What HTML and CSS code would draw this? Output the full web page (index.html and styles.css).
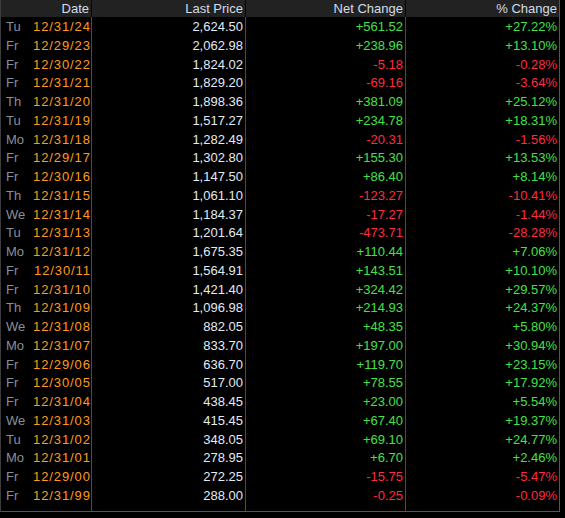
FILE: index.html
```html
<!DOCTYPE html>
<html>
<head>
<meta charset="utf-8">
<link rel="stylesheet" href="styles.css">
</head>
<body>
<div class="board">
  <div class="row head">
    <div class="cell c1">Date</div>
    <div class="cell">Last Price</div>
    <div class="cell">Net Change</div>
    <div class="cell">% Change</div>
  </div>
  <div id="rows" class="rows"></div>
  <div class="row filler">
    <div class="cell c1"></div><div class="cell"></div><div class="cell"></div><div class="cell"></div>
  </div>
</div>
<script src="app.js"></script>
</body>
</html>
```
FILE: app.js
```js
const data = [
["Tu","12/31/24","2,624.50","+561.52","+27.22%"],
["Fr","12/29/23","2,062.98","+238.96","+13.10%"],
["Fr","12/30/22","1,824.02","-5.18","-0.28%"],
["Fr","12/31/21","1,829.20","-69.16","-3.64%"],
["Th","12/31/20","1,898.36","+381.09","+25.12%"],
["Tu","12/31/19","1,517.27","+234.78","+18.31%"],
["Mo","12/31/18","1,282.49","-20.31","-1.56%"],
["Fr","12/29/17","1,302.80","+155.30","+13.53%"],
["Fr","12/30/16","1,147.50","+86.40","+8.14%"],
["Th","12/31/15","1,061.10","-123.27","-10.41%"],
["We","12/31/14","1,184.37","-17.27","-1.44%"],
["Tu","12/31/13","1,201.64","-473.71","-28.28%"],
["Mo","12/31/12","1,675.35","+110.44","+7.06%"],
["Fr","12/30/11","1,564.91","+143.51","+10.10%"],
["Fr","12/31/10","1,421.40","+324.42","+29.57%"],
["Th","12/31/09","1,096.98","+214.93","+24.37%"],
["We","12/31/08","882.05","+48.35","+5.80%"],
["Mo","12/31/07","833.70","+197.00","+30.94%"],
["Fr","12/29/06","636.70","+119.70","+23.15%"],
["Fr","12/30/05","517.00","+78.55","+17.92%"],
["Fr","12/31/04","438.45","+23.00","+5.54%"],
["We","12/31/03","415.45","+67.40","+19.37%"],
["Tu","12/31/02","348.05","+69.10","+24.77%"],
["Mo","12/31/01","278.95","+6.70","+2.46%"],
["Fr","12/29/00","272.25","-15.75","-5.47%"],
["Fr","12/31/99","288.00","-0.25","-0.09%"]
];
const rows = document.getElementById("rows");
for (const [d, dt, p, n, c] of data) {
  const cls = n.startsWith("-") ? "neg" : "pos";
  const r = document.createElement("div");
  r.className = "row";
  r.innerHTML =
    `<div class="cell c1"><span class="day">${d}</span><span class="date">${dt}</span></div>` +
    `<div class="cell price">${p}</div>` +
    `<div class="cell ${cls}">${n}</div>` +
    `<div class="cell ${cls}">${c}</div>`;
  rows.appendChild(r);
}
```
FILE: styles.css
```css
html, body {
  margin: 0;
  padding: 0;
  background: #000;
}
body {
  font-family: "Liberation Sans", Arial, sans-serif;
  font-size: 13px;
}
.board {
  width: 560px;
  height: 512px;
  box-sizing: border-box;
  border-left: 1px solid #3c3c3c;
  border-right: 1px solid #555;
  border-bottom: 1px solid #555;
  display: flex;
  flex-direction: column;
}
.row {
  display: grid;
  grid-template-columns: 91px 154px 160px 153px;
  height: 18.76px;
}
.cell {
  box-sizing: border-box;
  border-right: 1px solid #4a4a4a;
  padding: 0 2px 0 0;
  text-align: right;
  line-height: 19px;
  white-space: nowrap;
}
.row > .cell:last-child {
  border-right: none;
}
.head {
  height: 17px;
  background: #222;
  color: #d2dceb;
}
.head .cell {
  line-height: 17px;
  border-right-color: #050505;
}
.head .c1 {
  justify-content: flex-end;
  padding-right: 2px;
}
.c1 {
  display: flex;
  justify-content: space-between;
  padding: 0 1px 0 5px;
}
.day {
  color: #86909b;
}
.date {
  color: #ff9b1c;
  letter-spacing: 0.9px;
  margin-right: -0.9px;
}
.price {
  color: #e2eaf3;
}
.pos {
  color: #45e048;
}
.neg {
  color: #ff2b40;
}
.filler {
  flex: 1;
}
```
